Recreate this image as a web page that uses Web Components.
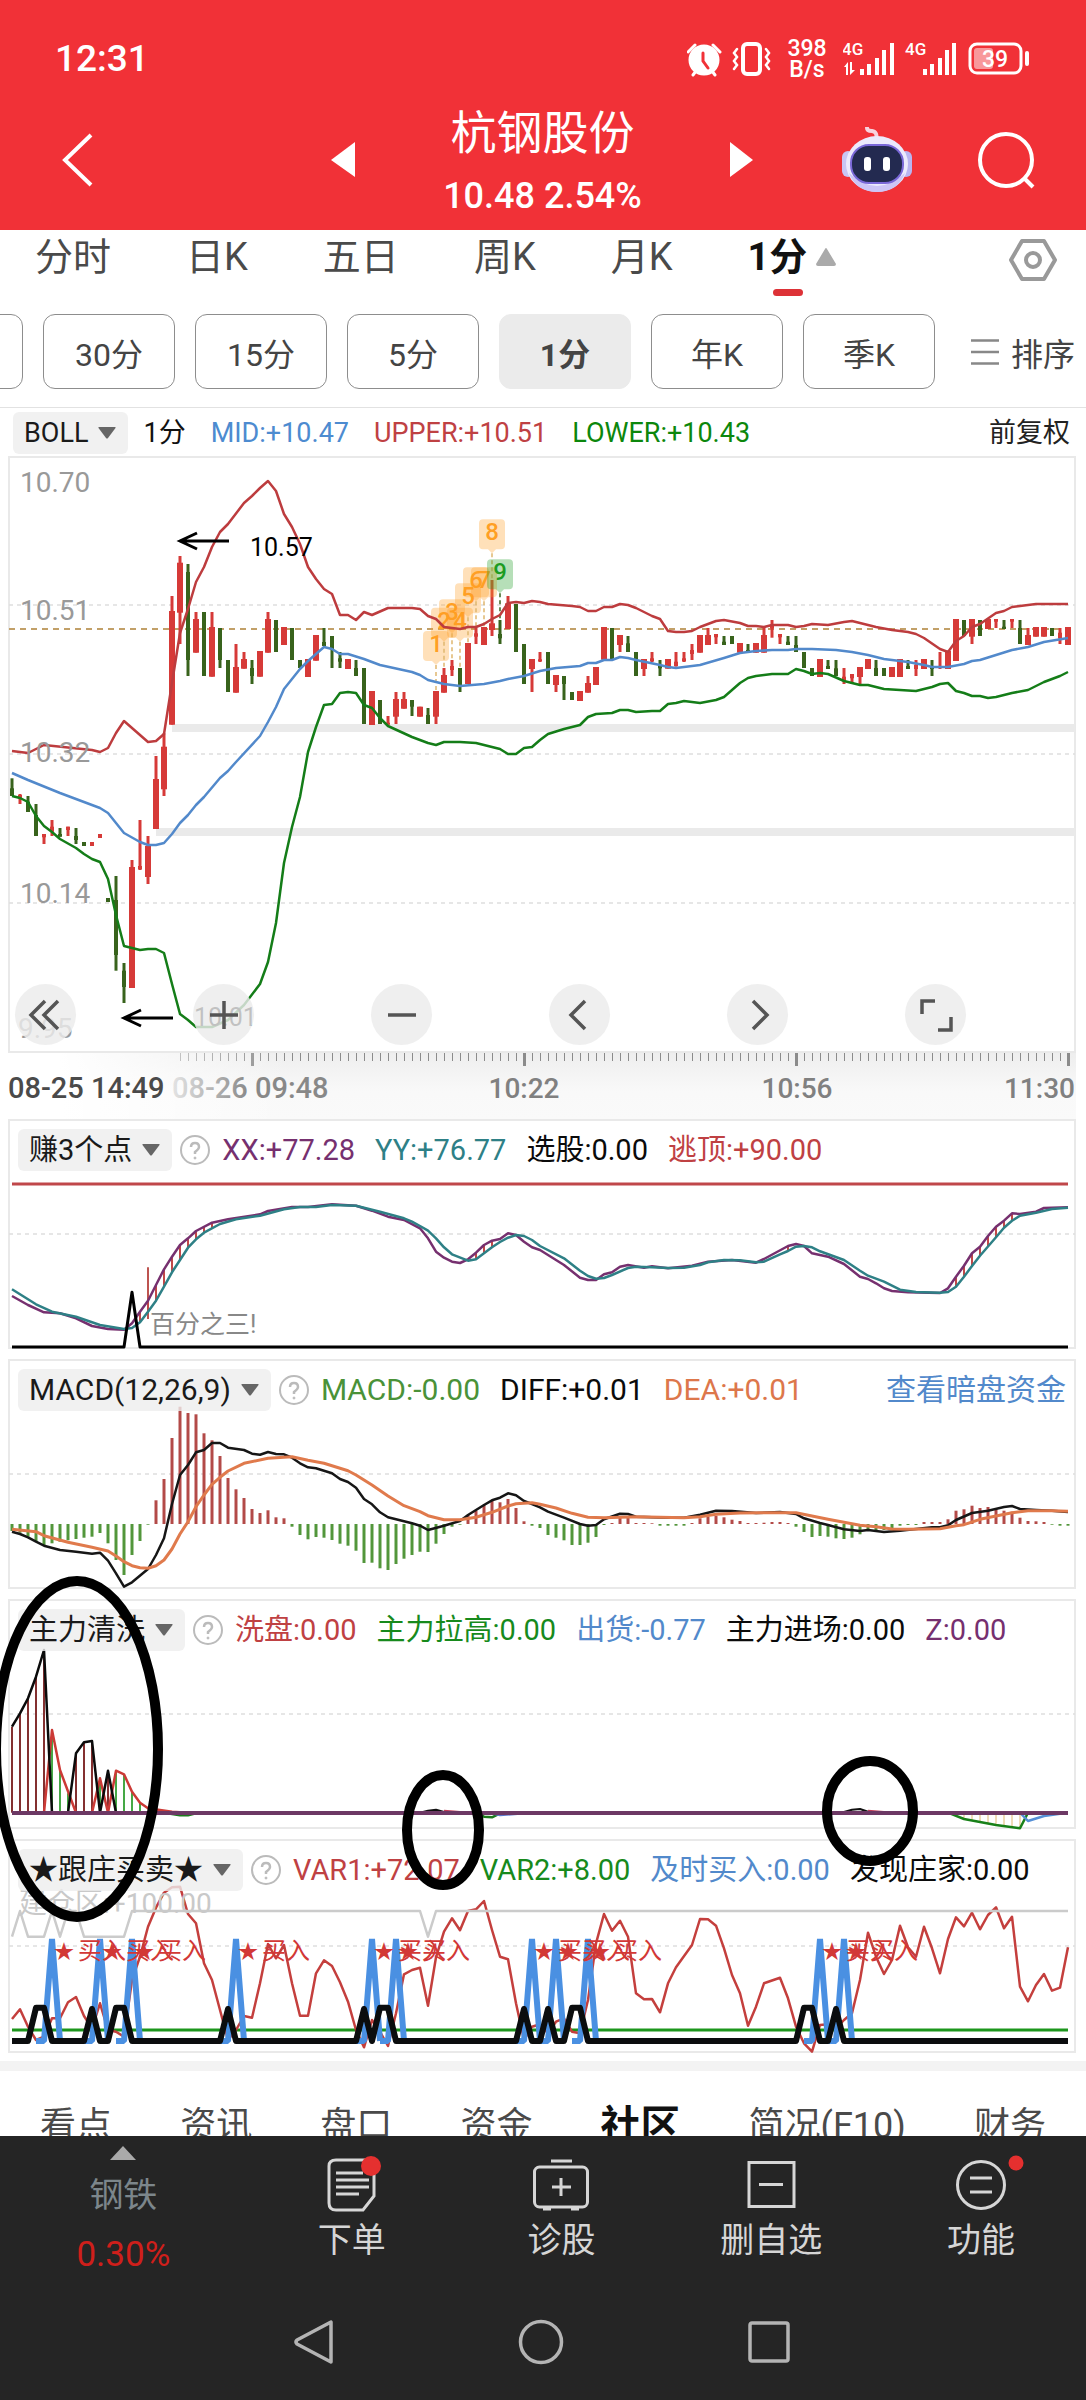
<!DOCTYPE html>
<html lang="zh-CN">
<head>
<meta charset="utf-8">
<meta name="viewport" content="width=device-width, initial-scale=1">
<title>杭钢股份</title>
<style>
  html, body { margin: 0; height: 100%; background: #fff; }
  body { font-family: Roboto, "Noto Sans CJK SC", sans-serif; color: #111; }
</style>
</head>
<body>
<stock-app></stock-app>

<script>
const RESET = `*{box-sizing:border-box} button{font:inherit;color:inherit;background:none;border:0;padding:0;margin:0} a{color:inherit;text-decoration:none} svg{display:block} nav,header{display:flex}`;

class Base extends HTMLElement {
  connectedCallback() {
    if (this.shadowRoot) return;
    this.attachShadow({ mode: 'open' }).innerHTML = `<style>${RESET}${this.css()}</style>${this.html()}`;
  }
  css() { return ''; }
  html() { return '<slot></slot>'; }
}
const define = (name, css, html) => customElements.define(name, class extends Base {
  css() { return css; }
  html() { return typeof html === 'function' ? html(this) : html; }
});

/* ---------- chart helpers: one slot per minute bar, 8 units apart ---------- */
const X = k => 12 + 8 * k;
const scaleFrom = top => v => +(top + v / 3).toFixed(1);
const parse = s => s.trim().split(/\s+/).map(p => p.split(':').map(Number));
const line = (s, Y, color, w = 2.5) =>
  `<polyline points="${parse(s).map(([k, v]) => X(k) + ',' + Y(v)).join(' ')}" fill="none" stroke="${color}" stroke-width="${w}" stroke-linejoin="round"/>`;
const valueAt = (pts, k) => {
  for (let i = 1; i < pts.length; i++) if (pts[i][0] >= k) {
    const [a, b] = [pts[i - 1], pts[i]];
    return a[1] + (b[1] - a[1]) * (k - a[0]) / (b[0] - a[0]);
  }
};
const grid = y => `<path d="M9 ${y}H1075" stroke="#dedede" stroke-width="1.5" stroke-dasharray="4 4"/>`;
const frame = (y, h) => `<rect x="9" y="${y}" width="1066" height="${h}" fill="none" stroke="#e9e9e9" stroke-width="2"/>`;
const bar = (k, a, b, color, w = 3) => `<path d="M${X(k)} ${a}V${b}" stroke="${color}" stroke-width="${w}"/>`;

/* ---------- status bar ---------- */
define('status-bar', `
  :host{display:flex;align-items:center;height:78px;padding:40px 55px 0 55px;color:#fff;box-sizing:border-box}
  time{font-size:37px;line-height:38px;font-weight:500;flex:1}
  .icons{display:flex;align-items:center}
  .speed{font-size:23px;line-height:21px;text-align:center;font-weight:500;width:40px;margin:0 16px}
`, `
  <time>12:31</time>
  <div class="icons">
    <svg width="84" height="36" viewBox="689 40 84 36" fill="none" stroke="#fff" stroke-width="3" stroke-linecap="round">
      <circle cx="706" cy="59" r="14" fill="#fff"/><path d="M690 51L697 44M722 51L715 44M698 70L695 74M714 70L717 74"/><path d="M705 52V60L710 67" stroke="#f13137"/>
      <rect x="745" y="43" width="17" height="30" rx="4" stroke-width="4"/>
      <path d="M739 48L736 52L739 56L736 60L739 64L736 68M768 48L771 52L768 56L771 60L768 64L771 68" stroke-width="2.5"/>
    </svg>
    <div class="speed">398<br>B/s</div>
    <svg width="188" height="40" viewBox="844 38 188 40" fill="#fff" font-family="Roboto" font-weight="500">
      <text x="843" y="54" font-size="17">4G</text><text x="906" y="54" font-size="17">4G</text>
      <path d="M845 66L849 61V74H847V66ZM853 61H851V74L856 69H853Z"/>
      <path d="M861 68h4v6h-4zM868 63h4v11h-4zM876 57h4v17h-4zM883 49h4v25h-4zM891 42h4v32h-4z"/>
      <path d="M924 68h4v6h-4zM931 63h4v11h-4zM939 57h4v17h-4zM946 49h4v25h-4zM953 42h4v32h-4z"/>
      <rect x="971" y="43" width="51" height="29" rx="7" fill="none" stroke="#fff" stroke-width="3"/>
      <rect x="975" y="47" width="19" height="21" rx="3" opacity=".5"/><rect x="1026" y="50" width="4" height="15" rx="2"/>
      <text x="983" y="66" font-size="23">39</text>
    </svg>
  </div>
`);

/* ---------- title bar ---------- */
define('stock-header', `
  :host{display:block;background:#f13137;color:#fff;height:230px}
  header{display:grid;grid-template-columns:331px 24px 1fr 24px 332px;align-items:center;height:164px;margin-bottom:-12px}
  .back{padding-left:60px;justify-self:start}
  .name{text-align:center;padding-top:8px}
  h1{margin:0;font-size:46px;line-height:60px;font-weight:400}
  p{margin:0;font-size:36px;line-height:58px;padding-top:4px;font-weight:500}
  .right{display:flex;align-items:center;gap:65px;padding-left:88px}
`, `
  <status-bar></status-bar>
  <header>
    <button class="back" aria-label="返回"><svg width="34" height="56" viewBox="0 0 34 56"><path d="M31 3L5 28L31 53" fill="none" stroke="#fff" stroke-width="4"/></svg></button>
    <button aria-label="上一只"><svg width="24" height="36" viewBox="0 0 24 36"><path d="M24 0V35L0 18Z" fill="#fff"/></svg></button>
    <div class="name"><h1>杭钢股份</h1><p>10.48 2.54%</p></div>
    <button aria-label="下一只"><svg width="24" height="36" viewBox="0 0 24 36"><path d="M0 0V35L23 18Z" fill="#fff"/></svg></button>
    <div class="right">
      <button aria-label="助手"><svg width="70" height="66" viewBox="0 0 70 66">
        <path d="M34 13Q36 5 30 4Q25 4 25 1" fill="none" stroke="#f7d3de" stroke-width="4" stroke-linecap="round"/>
        <rect x="0" y="24" width="12" height="26" rx="6" fill="#c9c5f4"/><rect x="58" y="24" width="12" height="26" rx="6" fill="#b9b4f0"/>
        <ellipse cx="35" cy="37" rx="31" ry="28" fill="#eceafc"/><path d="M7 46Q35 72 63 46Q56 65 35 65Q14 65 7 46Z" fill="#cdc5f6"/>
        <rect x="9" y="18" width="52" height="38" rx="18" fill="#232a50" stroke="#7a68d8" stroke-width="2"/>
        <rect x="22" y="30" width="7" height="14" rx="3" fill="#fff"/><rect x="41" y="30" width="7" height="14" rx="3" fill="#fff"/></svg></button>
      <button aria-label="搜索"><svg width="60" height="60" viewBox="0 0 60 60" fill="none" stroke="#fff" stroke-width="4"><circle cx="29" cy="30" r="26"/><path d="M47 48L56 57"/></svg></button>
    </div>
  </header>
`);

/* ---------- period tabs ---------- */
define('period-tabs', `
  :host{display:flex;align-items:flex-start;padding:8px 29px 0 35px;height:66px;color:#4a4a4a}
  nav{flex:1;gap:75px}
  button{font-size:38px;line-height:38px;height:58px;display:flex;align-items:flex-start}
  .on{font-weight:700;color:#111;flex-direction:column;align-items:center}
  .on span{display:flex;align-items:center;gap:8px}
  .on i{width:30px;height:8px;border-radius:4px;background:#dd3237;margin:13px 8px 0 0}
`, `
  <nav><button>分时</button><button>日K</button><button>五日</button><button>周K</button><button>月K</button>
  <button class="on"><span>1分<svg width="22" height="18" viewBox="0 0 22 18"><path d="M10 1Q11 -1 12 1L21 16Q21 18 19 18H3Q1 18 1 16Z" fill="#aaa"/></svg></span><i></i></button></nav>
  <button aria-label="设置"><svg width="48" height="44" viewBox="0 0 48 44" fill="none" stroke="#999" stroke-width="4" stroke-linejoin="round"><path d="M13 3H35L46 22L35 41H13L2 22Z"/><circle cx="24" cy="22" r="7"/></svg></button>
`);

define('period-chips', `
  :host{display:flex;align-items:center;padding:18px 0 18px 0;border-bottom:1px solid #e2e2e2;color:#444;font-size:32px;overflow:hidden}
  nav{gap:20px;margin-left:-109px}
  button{flex:none;white-space:nowrap}
  nav button{width:132px;height:75px;border:1px solid #8d8d8d;border-radius:12px}
  nav .on{background:#ebebeb;border-color:#ebebeb;font-weight:700}
  .sort{margin-left:36px;display:flex;align-items:center;gap:12px}
`, `
  <nav><button aria-label="60分"></button><button>30分</button><button>15分</button><button>5分</button><button class="on">1分</button><button>年K</button><button>季K</button></nav>
  <button class="sort"><svg width="28" height="26" viewBox="0 0 28 26"><path d="M0 1.500H28M0 13H28M0 24.500H28" stroke="#888" stroke-width="2.500"/></svg>排序</button>
`);

/* ---------- indicator header rows ---------- */
define('indicator-pick', `
  :host{display:block}
  button{display:flex;align-items:center;gap:10px;height:42px;padding:0 12px 0 11px;border-radius:6px;background:rgba(238,238,238,.8);color:#1a1a1a;white-space:nowrap}
`, `<button><slot></slot><svg width="18" height="12" viewBox="0 0 18 12"><path d="M1 0H17Q18 0 17.500 1L10 11Q9 12 8 11L.5 1Q0 0 1 0Z" fill="#666"/></svg></button>`);

define('indicator-row', `
  :host{display:flex;align-items:center;gap:20px;font-size:29px;line-height:42px;padding:10px 20px 0 18px;white-space:nowrap}
  :host([wide]){font-size:30px}
  .lead{display:flex;align-items:center;gap:8px;margin-right:-8px}
`, `
  <div class="lead"><slot name="pick"></slot>
  <svg width="30" height="30" viewBox="0 0 30 30" fill="none" stroke="#bbb" stroke-width="2"><circle cx="15" cy="15" r="14"/><path d="M11 12Q11 8 15 8Q19 8 19 12Q19 14 15 17V19" stroke-width="2.500"/><circle cx="15" cy="23" r="1" fill="#bbb" stroke-width="1"/></svg></div>
  <slot></slot>`);

define('boll-row', `
  :host{display:flex;align-items:center;font-size:27px;line-height:44px;padding:3px 16px 1px 13px;gap:25px;white-space:nowrap}
  indicator-pick{margin-right:-10px}
  .end{margin-left:auto;color:#222}
`, `
  <indicator-pick>BOLL</indicator-pick><span>1分</span>
  <span style="color:#4d8bd0">MID:+10.47</span><span style="color:#bf4143">UPPER:+10.51</span><span style="color:#0c870c">LOWER:+10.43</span>
  <button class="end">前复权</button>
`);

/* ---------- chart panel: header stacked over the plot ---------- */
define('chart-panel', `
  :host{display:grid}
  ::slotted(*){grid-area:1/1;align-self:start;min-width:0}
  ::slotted(chart-tools){align-self:end;z-index:1}
`, `<slot></slot>`);

define('chart-tools', `
  :host{display:flex;gap:117px;padding:0 0 8px 15px}
  button{width:61px;height:61px;border-radius:50%;background:rgba(235,235,235,.82);display:grid;place-items:center}
`, () => ['M17 4L3 18L17 32M30 4L16 18L30 32', 'M18 4V32M4 18H32', 'M4 18H32', 'M23 4L9 18L23 32', 'M13 4L27 18L13 32', 'M17 4H4V17M33 20V33H20']
  .map((d, i) => `<button aria-label="${['最左', '放大', '缩小', '左移', '右移', '全屏'][i]}"><svg width="36" height="36" viewBox="0 0 36 36"><path d="${d}" fill="none" stroke="#555" stroke-width="3.500"/></svg></button>`).join(''));

const plot = (name, top, height, draw) => define(name, `:host{display:block} svg{width:100%;height:auto;font-family:Roboto,"Noto Sans CJK SC",sans-serif}`,
  () => `<svg viewBox="0 ${top} 1086 ${height}">${draw()}</svg>`);

/* ---------- candlestick chart ---------- */
const CANDLES = `0g985:1038:1015:1038 1r1032:1062:1035:1045 2g1038:1086:1055:1086 3g1062:1158:1095:1158 4r1152:1182:1152:1162 5r1110:1158:1130:1145 6g1134:1160:1152:1160 7r1130:1158:1130:1140 8g1134:1182:1158:1170 9g1176:1188 10r1176:1188 11r1152:1164 12g1344:1356 13g1278:1562:1350:1515 14g1539:1659:1562:1611 15r1230:1614:1251:1614 16r1110:1260:1248:1258 17r1158:1302:1188:1281 18r918:1137:987:1137 19r850:1038:890:1018 20r438:824:483:824 21r318:582:338:488 22g342:678:366:630 23r486:608:507:608 24g486:678 25r486:680:531:680 26g534:654:534:630 27g630:726 28r582:728:651:728 29r606:656:627:656 30g630:702:654:678 31r603:680 32r486:608:507:608 33g510:606 34r531:585 35g534:630 36g630:654 37r627:681 38r555:632 39g534:588:576:588 40g558:654:558:600 41g606:654:625:635 42r627:657 43g630:678:654:678 44g654:822 45r723:825 46g750:822 47r798:824:818:824 48r726:822:747:800 49r726:776:747:776 50g750:798:750:770 51r770:800 52g774:822:795:822 53r723:822:723:800 54r654:728:675:728 55r630:678:648:660 56g654:726:654:705 57r579:702 58r534:582:550:560 59r531:585 60r390:558:520:540 61g510:582:552:565 62r438:537:460:537 63g462:606 64g582:702 65r627:726:627:657 66r606:636:628:634 67g606:702 68r675:726:675:705 69g678:750:678:702 70g726:750 71r723:753 72r678:728:699:728 73r651:705 74r531:629 75g534:627 76r555:606:555:585 77g558:606:580:606 78g606:678 79r627:678:627:657 80r606:636:625:634 81g630:678:645:655 82r627:656 83r606:650:635:648 84r606:636:625:634 85r582:630:600:612 86r555:608 87r534:585:555:585 88r552:582:552:562 89g558:585:575:585 90g558:582 91r579:608 92g582:606:600:606 93r579:608 94r531:608:555:608 95r510:563:528:535 96r552:582:552:562 97g558:585:575:585 98g558:606:585:606 99g606:654 100g654:678 101r627:681 102g630:657:648:657 103g630:678:655:678 104r654:702:680:690 105r672:702:672:685 106r651:704:651:681 107r627:657 108g630:678:654:678 109g654:678 110r651:681 111r627:681 112g630:657:648:657 113r630:678:645:657 114r627:657 115g630:678:648:657 116r606:657:648:654 117r603:657 118r507:633 119g510:558 120r507:582:507:560 121g510:558 122r507:537 123r507:534:507:515 124g510:537:530:537 125r507:534:507:515 126g510:582:534:582 127r534:585:555:585 128r531:560 129r531:560 130g534:558 131r534:582:548:565 132r531:585`;
const abs = v => v;
plot('k-chart', 456, 597, () => {
  const Y = scaleFrom(450);
  const candles = CANDLES.split(' ').map(t => {
    const [, k, c, v] = t.match(/^(\d+)([rg])(.*)$/);
    const [hi, lo, a = hi, b = lo] = v.split(':').map(Number);
    const col = c === 'r' ? '#d63a38' : '#38631c';
    const w = c === 'r' && (b - a) > 18 ? 6 : 4;
    return bar(k, Y(hi), Y(lo), col, 3) + bar(k, Y(a), Y(b), col, w);
  }).join('');
  const pins = [[53, 543, 1, 723], [54, 473, 2, 654], [55, 448, 3, 630], [56, 473, 4, 654], [57, 400, 5, 579], [58, 352, 6, 534], [59, 352, 7, 531], [60, 208, 8, 390], [61, 328, 9, 510]]
    .map(([k, v, n, end]) => {
      const c = n === 9 ? '#1c9c22' : '#ff9f24', x = X(k), y = Y(v);
      return `<path d="M${x} ${y + 34}V${Y(end)}" stroke="${n === 9 ? '#38631c' : '#e0b76f'}" stroke-width="1.500" stroke-dasharray="4 3"/>
        <path d="M${x - 9} ${y}h18q4 0 4 4v22q0 4 -4 4h-5l-4 4l-4 -4h-5q-4 0 -4 -4v-22q0 -4 4 -4z" fill="${c}" opacity=".32"/>
        <text x="${x}" y="${y + 21}" text-anchor="middle" font-size="24" font-weight="500" fill="${c}">${n}</text>`;
    }).join('');
  return `
    ${frame(457, 595)}${grid(605)}${grid(754)}${grid(903)}
    <path d="M172 728H1075M156 832H1075" stroke="#eaeaea" stroke-width="8"/>
    <path d="M9 629H1075" stroke="#c2a068" stroke-width="2" stroke-dasharray="6 5"/>
    ${candles}${pins}
    ${line('0:751 2:753 4:745 10:750 11:752 12:748 13:733 14:721 15:728 17:742 18:741 19:734 20:683 21:633 22:609 23:582 24:567 25:547 26:532 27:524 29:503 30:496 31:488 32:481 33:491 34:514 35:527 36:544 37:567 38:579 39:589 40:594 41:615 42:615 43:620 44:612 45:615 47:608 50:608 51:609 52:616 53:619 54:627 56:629 57:627 58:627 59:624 60:619 61:615 62:603 63:602 64:603 65:601 66:602 67:604 70:606 71:607 72:611 73:611 74:607 75:607 76:604 77:605 78:608 80:616 81:619 82:631 83:632 84:632 85:631 86:627 87:624 88:621 89:620 91:623 92:626 93:626 94:627 95:625 97:625 98:627 99:626 100:624 102:625 104:622 105:621 108:627 110:630 112:632 113:634 114:638 116:649 117:652 118:641 119:636 120:627 121:624 123:613 124:611 125:607 126:606 128:604 132:604', abs, '#bd3c3e')}
    ${line('0:773 2:780 6:793 11:808 12:813 13:823 14:833 16:842 17:845 18:845 19:843 20:834 21:823 22:815 23:805 24:797 26:778 27:771 28:762 31:736 32:722 33:707 34:689 36:669 37:661 39:647 40:649 41:654 42:654 44:659 46:665 50:672 51:675 52:680 54:684 56:686 59:684 61:681 62:679 64:676 66:671 68:668 71:666 72:663 73:663 74:660 75:660 76:657 77:658 78:660 81:665 82:667 83:668 86:665 89:658 91:653 93:651 95:650 97:650 98:649 100:649 103:650 105:652 107:655 109:659 112:662 114:665 115:667 117:667 119:664 120:661 121:660 123:655 125:650 127:647 129:642 132:638', abs, '#5289cb')}
    ${line('0:796 1:798 2:802 3:816 4:826 5:832 6:839 8:848 9:854 10:859 11:862 12:879 13:915 14:946 15:948 16:950 17:949 18:949 19:953 20:984 21:1014 22:1020 23:1027 25:1027 27:1020 29:1005 31:984 32:962 33:923 34:863 35:827 36:797 37:752 38:727 39:705 40:704 41:693 42:692 43:693 44:705 45:708 46:718 47:726 50:737 52:743 53:745 54:742 56:742 58:743 60:747 61:749 62:754 63:754 64:748 65:747 66:740 67:734 69:729 71:725 72:717 73:714 75:713 76:710 77:710 78:712 80:711 81:711 82:704 83:703 84:701 85:702 86:703 88:700 89:697 90:690 91:683 92:678 93:676 95:674 97:674 98:669 99:671 100:674 101:673 102:674 104:681 106:685 107:685 109:689 113:691 114:689 115:687 116:684 117:683 118:691 119:693 120:696 121:696 122:698 123:697 125:693 127:690 129:682 131:676 132:672', abs, '#147d18')}
    <g font-size="28" fill="#999"><text x="20" y="492">10.70</text><text x="20" y="620">10.51</text><text x="20" y="762">10.32</text><text x="20" y="903">10.14</text><text x="18" y="1038">9.95</text></g>
    <path d="M229 541H181M197 533L180 541L197 549M173 1018H125M141 1010L124 1018L141 1026" fill="none" stroke="#000" stroke-width="3"/>
    <text x="250" y="556" font-size="25">10.57</text><text x="194" y="1026" font-size="25">10.01</text>`;
});

plot('time-axis', 1053, 66, () => {
  let t = '';
  for (let k = 21; k < 133; k++) t += `<path d="M${X(k) + .5} 1053V${k % 34 === 30 ? 1066 : 1061}" stroke="#8b8b8b" stroke-width="${k % 34 === 30 ? 3 : 1}"/>`;
  return `<defs><linearGradient id="b" x2="0" y2="1"><stop stop-color="#eeeeee"/><stop offset=".6" stop-color="#f9f9f9"/><stop offset="1" stop-color="#fafafa"/></linearGradient>
    <linearGradient id="f" gradientUnits="userSpaceOnUse" x1="60" x2="290" y1="0" y2="0"><stop stop-color="#fff"/><stop offset="1" stop-color="#fff" stop-opacity="0"/></linearGradient>
    <linearGradient id="t" gradientUnits="userSpaceOnUse" x1="170" x2="250" y1="0" y2="0"><stop stop-color="#e6e6e6"/><stop offset="1" stop-color="#888"/></linearGradient></defs>
    <rect x="8" y="1053" width="1068" height="66" fill="url(#b)"/>${t}<rect x="0" y="1053" width="300" height="66" fill="url(#f)"/>
    <g font-size="29" font-weight="500" fill="#808080"><text x="8" y="1098" fill="#4a4a4a">08-25 14:49</text><text x="172" y="1098" fill="url(#t)">08-26 09:48</text></g>
    <g font-size="28" font-weight="500" fill="#808080"><text x="524" y="1098" text-anchor="middle">10:22</text><text x="797" y="1098" text-anchor="middle">10:56</text><text x="1075" y="1098" text-anchor="end">11:30</text></g>`;
});

/* ---------- 赚3个点 ---------- */
plot('earn-chart', 1119, 240, () => {
  const Y = scaleFrom(1110);
  const xx = '0:558 2:585 4:607 6:610 8:625 10:648 12:657 14:659 15:640 16:605 17:572 18:525 19:478 20:440 21:405 22:385 23:363 25:338 27:328 31:313 32:303 35:291 37:291 40:283 43:287 45:302 47:320 49:330 51:355 52:385 53:425 54:443 55:455 56:459 57:448 58:428 59:405 60:392 61:387 62:370 63:375 64:395 65:412 66:420 69:465 71:503 72:510 73:510 74:493 75:487 76:470 77:465 79:473 80:469 82:475 85:467 87:455 90:450 93:458 94:447 97:408 98:402 99:408 100:430 102:440 104:462 106:500 107:507 108:520 109:535 110:543 112:547 116:549 117:535 118:500 119:467 120:430 121:410 122:378 123:350 124:332 125:310 126:312 128:305 129:294 132:292';
  const yy = '0:538 3:583 5:605 8:620 11:645 14:657 15:654 16:637 17:605 18:572 19:530 20:487 21:450 22:413 23:388 24:368 26:342 28:328 31:317 34:298 36:291 38:291 40:285 43:287 46:305 49:325 50:335 51:348 52:362 53:385 54:412 55:433 57:452 58:448 59:430 60:412 61:396 62:383 63:375 64:378 65:390 66:408 69:445 71:482 72:498 73:506 74:504 75:495 77:474 78:470 80:472 82:474 84:473 86:465 87:457 89:450 91:451 93:457 94:455 96:433 97:423 98:410 99:408 100:412 101:424 104:450 106:482 107:497 109:515 111:539 113:546 116:548 117:546 118:530 119:500 120:468 121:437 123:382 124:353 125:332 126:317 128:308 130:297 132:293';
  const px = parse(xx), py = parse(yy);
  const bars = [16, 17, 18, 19, 20, 21, 22, 23, 24, 25, 58, 59, 60, 97, 118, 119, 120, 121, 122, 123, 124, 125].map(k => bar(k, Y(valueAt(px, k)), Y(valueAt(py, k)), '#c24848', 2)).join('');
  return `${frame(1120, 228)}${grid(1234)}<path d="M12 1184H1068" stroke="#c0474a" stroke-width="3"/>
    ${bar(17, Y(472), Y(627), '#bd5450', 2)}${bars}${line(xx, Y, '#76306f')}${line(yy, Y, '#2e8086')}
    ${line('0:711 14:711 15:547 16:711 132:711', Y, '#000', 3)}
    <text x="150" y="1333" font-size="25" fill="#888">百分之三!</text>`;
});

/* ---------- MACD ---------- */
plot('macd-chart', 1359, 240, () => {
  const Y = scaleFrom(1350);
  const hist = '543 548 560 575 587 580 575 571 567 563 560 549 580 630 675 615 573 524 451 387 264 170 189 193 250 271 318 384 418 444 477 489 481 502 505 530 555 568 561 563 570 581 587 602 639 638 655 660 642 626 615 605 606 581 552 530 524 495 482 465 450 457 447 474 514 527 534 555 563 571 585 585 578 561 525 519 500 500 519 519 520 527 527 527 527 519 505 500 497 502 509 513 519 519 518 516 516 519 530 546 561 558 560 565 567 563 553 542 540 540 536 527 525 525 516 516 516 508 482 478 467 474 471 478 482 485 503 513 514 516 524 527 527'
    .split(' ').map((v, k) => bar(k, 1524, Y(+v), v > 522 ? '#52963b' : '#b34a48')).join('');
  return `${frame(1360, 228)}${grid(1474)}${hist}
    ${line('0:545 1:552 2:562 3:575 4:587 6:600 8:605 10:611 11:608 12:632 13:670 14:710 15:697 17:657 18:615 19:565 20:462 21:375 22:345 23:307 24:300 25:279 26:279 27:293 29:300 30:311 31:314 32:306 33:312 34:313 35:323 36:340 37:352 38:355 40:370 41:387 42:396 43:413 44:447 45:463 46:487 47:502 48:508 50:520 51:527 52:540 54:527 56:513 57:495 58:480 59:465 60:451 61:443 62:430 63:436 64:453 65:462 66:472 67:485 69:503 71:522 72:527 73:525 74:508 76:491 77:492 78:500 82:503 84:503 86:494 88:482 90:483 93:489 96:486 98:492 99:505 101:519 102:525 104:538 106:543 107:540 109:546 111:542 113:537 115:532 116:532 117:526 118:510 120:489 122:482 124:471 125:468 126:477 128:480 130:482 132:486', Y, '#161616')}
    ${line('0:538 3:545 4:557 7:577 10:592 12:603 13:618 14:635 15:647 16:653 17:655 18:647 19:630 20:597 21:552 22:515 23:470 24:435 25:403 26:382 27:363 29:340 32:325 35:320 37:331 39:340 42:362 43:375 45:405 47:438 49:467 51:485 52:497 54:509 56:509 58:502 60:487 62:468 63:461 65:458 66:463 68:474 70:490 72:502 74:503 78:500 84:503 86:500 88:493 91:489 95:488 98:488 100:498 102:508 104:517 106:526 108:530 110:537 112:538 116:536 118:527 119:524 121:508 123:498 125:488 127:482 130:482 132:484', Y, '#e07a4c', 3)}`;
});

/* ---------- 主力清洗 ---------- */
plot('wash-chart', 1599, 240, () => {
  const Y = scaleFrom(1350);
  const fill = (list, c, w) => list.map(([k, v]) => bar(k, Y(1388), Y(v), c, w)).join('');
  return `${frame(1600, 228)}${grid(1714)}
    ${fill([[0, 1130], [1, 1090], [2, 1045], [3, 980], [4, 905], [8, 1210], [9, 1177], [10, 1173], [12, 1270]], '#843030', 2)}
    ${fill([[5, 1150], [6, 1260], [7, 1330], [11, 1300], [13, 1265], [14, 1275], [15, 1325], [16, 1358]], '#45a845', 2)}
    ${fill([[118, 1396], [119, 1407], [120, 1411], [121, 1415], [122, 1420], [123, 1425], [124, 1428], [125, 1431], [126, 1435]], '#e0b76f', 1)}
    ${line('4:1388 5:1140 6:1260 8:1388 10:1388 11:1285 12:1388 13:1262 14:1273 15:1325 16:1358 17:1375 20:1385 22:1388', Y, '#cc3a36')}
    ${line('0:1130 1:1090 2:1045 3:980 4:900 5:1388 7:1388 8:1210 9:1177 10:1173 11:1388 12:1262 13:1388', Y, '#0b0b0b')}
    ${line('51:1388 52:1382 53:1379 54:1386', Y, '#111', 2)}${line('54:1382 56:1386', Y, '#c03a55', 2)}${line('104:1386 105:1379 106:1377 107:1385', Y, '#111', 2)}${line('107:1382 109:1386', Y, '#c03a55', 2)}
    ${line('19:1388 21:1396 22:1396 23:1390', Y, '#1d7a1d')}${line('58:1388 59:1400 60:1402 61:1390', Y, '#1d7a1d')}${line('60:1390 61:1395 64:1390', Y, '#5b78d0')}
    ${line('117:1388 119:1407 123:1425 126:1435 127:1388', Y, '#188018')}${line('126:1388 127:1413 129:1398 131:1391', Y, '#558fd6')}
    <path d="M12 1813H1068" stroke="#6c3864" stroke-width="4"/>`;
});

/* ---------- 跟庄买卖 ---------- */
plot('follow-chart', 1839, 222, () => {
  const Y = scaleFrom(1840);
  const buys = [5, 11, 15, 28, 45, 48, 65, 68, 72, 101, 104];
  const blue = buys.map(k => line(`${k - 2}:603 ${k - 1}:603 ${k}:297 ${k + 1}:603`, Y, '#4a90e2', 6).replace('"round"', '"bevel"')).join('');
  const labels = buys.map(k => `<text x="${X(k) + 2}" y="1959" font-size="20">★</text><text x="${X(k) + 26}" y="1959" font-size="24">买入</text>`).join('');
  return `${frame(1840, 212)}${grid(1946)}<path d="M12 2030H1068" stroke="#1c961c" stroke-width="3"/>
    ${line('0:537 1:508 2:560 3:600 4:590 5:535 6:535 7:487 8:471 9:528 10:565 11:490 12:570 13:575 14:590 15:420 16:350 17:260 18:203 19:158 20:142 21:140 22:222 23:250 24:370 25:420 26:510 27:600 28:570 29:528 30:533 31:430 32:312 33:355 34:315 35:430 36:527 37:527 38:400 39:361 40:378 41:427 42:485 43:570 44:622 45:540 46:575 47:618 48:520 49:403 50:390 51:383 52:497 53:352 54:275 55:235 56:271 57:213 58:208 59:183 60:270 61:350 62:358 63:490 64:600 65:560 66:553 67:580 68:545 69:535 70:575 71:580 72:480 73:310 74:222 75:272 76:242 77:290 78:460 79:478 80:477 81:517 82:430 83:382 85:315 86:237 87:238 88:257 89:325 90:405 91:460 92:557 93:500 94:430 96:413 97:475 98:560 99:610 100:635 101:555 102:553 103:565 104:540 105:520 106:420 107:278 108:350 109:402 110:360 111:257 112:322 113:350 114:260 115:325 116:400 117:297 118:232 119:259 120:218 121:268 122:225 123:202 124:265 125:230 126:440 127:484 128:435 129:402 130:452 131:443 132:322', Y, '#c43f3d')}
    ${line('0:290 1:213 2:290 4:290 5:213 6:290 7:213 8:213 9:290 14:290 15:213 51:213 52:290 53:213 132:213', Y, '#cbcbcb')}
    ${blue}
    ${line('0:603 2:603 3:503 4:503 5:603 9:603 10:507 11:603 12:603 13:503 14:503 15:603 26:603 27:507 28:603 43:603 44:507 45:603 46:503 47:503 48:603 63:603 64:507 65:603 66:603 67:507 68:603 69:603 70:503 71:503 72:603 98:603 99:503 100:503 101:603 102:603 103:507 104:603 132:603', Y, '#0b0d0e', 6)}
    <g fill="#d23836">${labels}</g>
    <text x="19" y="1913" font-size="28" fill="#c9c9c9">建仓区:+100.00</text>`;
});

/* ---------- hand-drawn circles over the charts ---------- */
define('ink-marks', `:host{position:absolute;inset:0;pointer-events:none;z-index:2} svg{width:100%;height:auto;overflow:visible}`,
  `<svg viewBox="0 456 1086 1605" fill="none" stroke="#000" stroke-width="10"><ellipse cx="77" cy="1749" rx="81" ry="168"/><ellipse cx="443" cy="1830" rx="36" ry="55"/><ellipse cx="870" cy="1811" rx="43" ry="50"/></svg>`);

define('chart-stack', `
  :host{display:block;position:relative}
  .r{color:#bf4143}.g{color:#178a1c}.b{color:#5289cb}.k{color:#0b0b0b}.p{color:#76306f}.t{color:#2e8086}.o{color:#dd774b}.m{color:#4a9238}
  .link{margin-left:auto}
`, `
  <chart-panel><k-chart></k-chart><chart-tools></chart-tools></chart-panel>
  <time-axis></time-axis>
  <chart-panel><earn-chart></earn-chart><indicator-row><indicator-pick slot="pick">赚3个点</indicator-pick><span class="p">XX:+77.28</span><span class="t">YY:+76.77</span><span class="k">选股:0.00</span><span class="r">逃顶:+90.00</span></indicator-row></chart-panel>
  <chart-panel><macd-chart></macd-chart><indicator-row wide><indicator-pick slot="pick">MACD(12,26,9)</indicator-pick><span class="m">MACD:-0.00</span><span class="k">DIFF:+0.01</span><span class="o">DEA:+0.01</span><a class="link b" href="#">查看暗盘资金</a></indicator-row></chart-panel>
  <chart-panel><wash-chart></wash-chart><indicator-row><indicator-pick slot="pick">主力清洗</indicator-pick><span class="r">洗盘:0.00</span><span class="g">主力拉高:0.00</span><span class="b">出货:-0.77</span><span class="k">主力进场:0.00</span><span class="p">Z:0.00</span></indicator-row></chart-panel>
  <chart-panel><follow-chart></follow-chart><indicator-row><indicator-pick slot="pick">★跟庄买卖★</indicator-pick><span class="r">VAR1:+72.07</span><span class="g">VAR2:+8.00</span><span class="b">及时买入:0.00</span><span class="k">发现庄家:0.00</span></indicator-row></chart-panel>
  <ink-marks></ink-marks>
`);

define('info-tabs', `
  :host{display:block;border-top:10px solid #f3f3f3}
  nav{justify-content:space-between;align-items:center;height:102px;padding:0 40px;font-size:36px;color:#4a4a4a;white-space:nowrap}
  .on{font-size:40px;font-weight:700;color:#111}
`, `<nav><button>看点</button><button>资讯</button><button>盘口</button><button>资金</button><button class="on">社区</button><button>简况(F10)</button><button>财务</button></nav>`);

/* ---------- bottom bars ---------- */
define('action-bar', `
  :host{display:grid;grid-template-columns:247fr 210fr 210fr 210fr 210fr;height:148px;color:#d6d6d6;font-size:34px;line-height:40px}
  button{display:flex;flex-direction:column;align-items:center}
  .sector{color:#7c868b;padding:10px 0 0}
  .sector span{margin-top:15px}.sector b{font-weight:400;color:#cf1f1b;margin-top:20px;font-size:35px}
  .act{padding-top:20px;gap:8px}
  svg{overflow:visible}
`, `
  <button class="sector"><svg width="26" height="14" viewBox="0 0 26 14"><path d="M13 0L26 14H0Z" fill="#aaa"/></svg><span>钢铁</span><b>0.30%</b></button>
  <button class="act"><svg width="56" height="56" viewBox="0 0 56 56" fill="none" stroke="#d6d6d6" stroke-width="3"><path d="M12 4H45Q50 4 50 9V40L39 54H12Q5 54 5 47V10Q5 4 12 4ZM12 17H39M12 24H45M12 31H45M12 38H35"/><circle cx="47" cy="10" r="10" fill="#e5302f" stroke="none"/></svg>下单</button>
  <button class="act"><svg width="56" height="56" viewBox="0 0 56 56" fill="none" stroke="#d6d6d6" stroke-width="3"><rect x="1.500" y="11" width="53" height="40" rx="5"/><path d="M18 5H39M28 22V40M19 31H38M10 53H18M38 53H46"/></svg>诊股</button>
  <button class="act"><svg width="56" height="56" viewBox="0 0 56 56" fill="none" stroke="#d6d6d6" stroke-width="3"><rect x="6" y="6.500" width="45" height="44"/><path d="M16 28.500H40"/></svg>删自选</button>
  <button class="act"><svg width="56" height="56" viewBox="0 0 56 56" fill="none" stroke="#d6d6d6" stroke-width="3"><circle cx="28" cy="29" r="23.500"/><path d="M17 22H39M17 36H39"/><circle cx="63" cy="7" r="7.500" fill="#e5302f" stroke="none"/></svg>功能</button>
`);

define('system-nav', `
  :host{display:flex;justify-content:center;align-items:center;gap:184px;height:116px;padding:0 3px 0 0}
`, `
  <button aria-label="后退"><svg width="40" height="46" viewBox="0 0 40 46"><path d="M37 3V43L3 25Q1 23 3 21Z" fill="none" stroke="#b4b4b4" stroke-width="3.500" stroke-linejoin="round"/></svg></button>
  <button aria-label="主页"><svg width="46" height="46" viewBox="0 0 46 46"><circle cx="23" cy="23" r="20.500" fill="none" stroke="#b4b4b4" stroke-width="3.500"/></svg></button>
  <button aria-label="最近任务"><svg width="42" height="42" viewBox="0 0 42 42"><rect x="2" y="2" width="38" height="38" rx="2" fill="none" stroke="#b4b4b4" stroke-width="3.500"/></svg></button>
`);

define('stock-app', `
  :host{display:grid;grid-template-rows:auto 1fr auto;height:100vh}
  main{overflow:hidden;min-height:0}
  footer{background:#252525}
`, `
  <stock-header></stock-header>
  <main><period-tabs></period-tabs><period-chips></period-chips><boll-row></boll-row><chart-stack></chart-stack><info-tabs></info-tabs></main>
  <footer><action-bar></action-bar><system-nav></system-nav></footer>
`);
</script>
</body>
</html>
